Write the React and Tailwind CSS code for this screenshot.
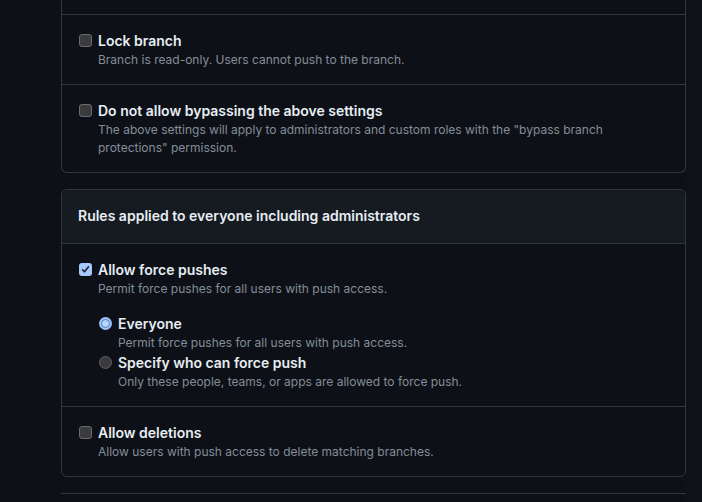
import React from 'react';

const font = { fontFamily: 'Inter, "Liberation Sans", sans-serif' };

function Box({ checked }) {
  if (checked) {
    return (
      <span className="mt-[3px] ml-px flex h-[13px] w-[13px] shrink-0 items-center justify-center rounded-[3px] bg-[#a6c8fb]">
        <svg width="9" height="9" viewBox="0 0 9 9">
          <path d="M1.5 4.8 L3.5 6.8 L7.5 1.8" fill="none" stroke="#1b2330" strokeWidth="1.6" strokeLinecap="round" strokeLinejoin="round" />
        </svg>
      </span>
    );
  }
  return (
    <span className="mt-[3px] ml-px block h-[13px] w-[13px] shrink-0 rounded-[3px] border border-[#6b6b6e] bg-[#3b3b3e]" />
  );
}

function Radio({ checked }) {
  if (checked) {
    return (
      <span className="mt-[3px] ml-px flex h-[13px] w-[13px] shrink-0 items-center justify-center rounded-full bg-[#9cc3fb]">
        <span className="block h-[9px] w-[9px] rounded-full border border-[#4e7fc4] bg-[#b8d4fd]" />
      </span>
    );
  }
  return <span className="mt-[3px] ml-px block h-[13px] w-[13px] shrink-0 rounded-full border border-[#5e5e62] bg-[#3b3b3e]" />;
}

function Option({ title, desc, checked, radio, children }) {
  return (
    <div className="flex gap-[6px]">
      {radio ? <Radio checked={checked} /> : <Box checked={checked} />}
      <div className="flex-1">
        <div className="text-[14px] leading-5 font-semibold text-[#e6edf3]">{title}</div>
        <div className="text-[12px] leading-[18px] text-[#848d97]">{desc}</div>
        {children}
      </div>
    </div>
  );
}

export default function App() {
  return (
    <div className="flex h-[502px] w-[702px] overflow-hidden bg-[#0d1117]" style={font}>
      <div className="w-[61px] shrink-0" />
      <div className="w-[625px] shrink-0">
        {/* Branch protection box, top cut off */}
        <div className="rounded-b-md border-x border-b border-[#30363d]">
          <div className="h-[15px] border-b border-[#30363d]" />
          <div className="border-b border-[#30363d] px-4 pt-4 pb-[15px]">
            <Option title="Lock branch" desc="Branch is read-only. Users cannot push to the branch." />
          </div>
          <div className="px-4 pt-4 pb-[15px]">
            <Option
              title="Do not allow bypassing the above settings"
              desc={'The above settings will apply to administrators and custom roles with the "bypass branch protections" permission.'}
            />
          </div>
        </div>

        {/* Rules for everyone */}
        <div className="mt-4 rounded-md border border-[#30363d]">
          <div className="rounded-t-md border-b border-[#30363d] bg-[#161b22] px-4 pt-4 pb-[17px]">
            <h3 className="text-[14px] leading-5 font-semibold text-[#e6edf3]">
              Rules applied to everyone including administrators
            </h3>
          </div>
          <div className="border-b border-[#30363d] px-4 pt-4 pb-[15px]">
            <Option checked title="Allow force pushes" desc="Permit force pushes for all users with push access.">
              <div className="mt-4 flex flex-col gap-px">
                <Option radio checked title="Everyone" desc="Permit force pushes for all users with push access." />
                <Option
                  radio
                  title="Specify who can force push"
                  desc="Only these people, teams, or apps are allowed to force push."
                />
              </div>
            </Option>
          </div>
          <div className="px-4 pt-4 pb-[15px]">
            <Option title="Allow deletions" desc="Allow users with push access to delete matching branches." />
          </div>
        </div>

        <div className="mt-4 border-t border-[#30363d]" />
      </div>
      <div className="flex-1 bg-[#0f1318]" />
    </div>
  );
}
